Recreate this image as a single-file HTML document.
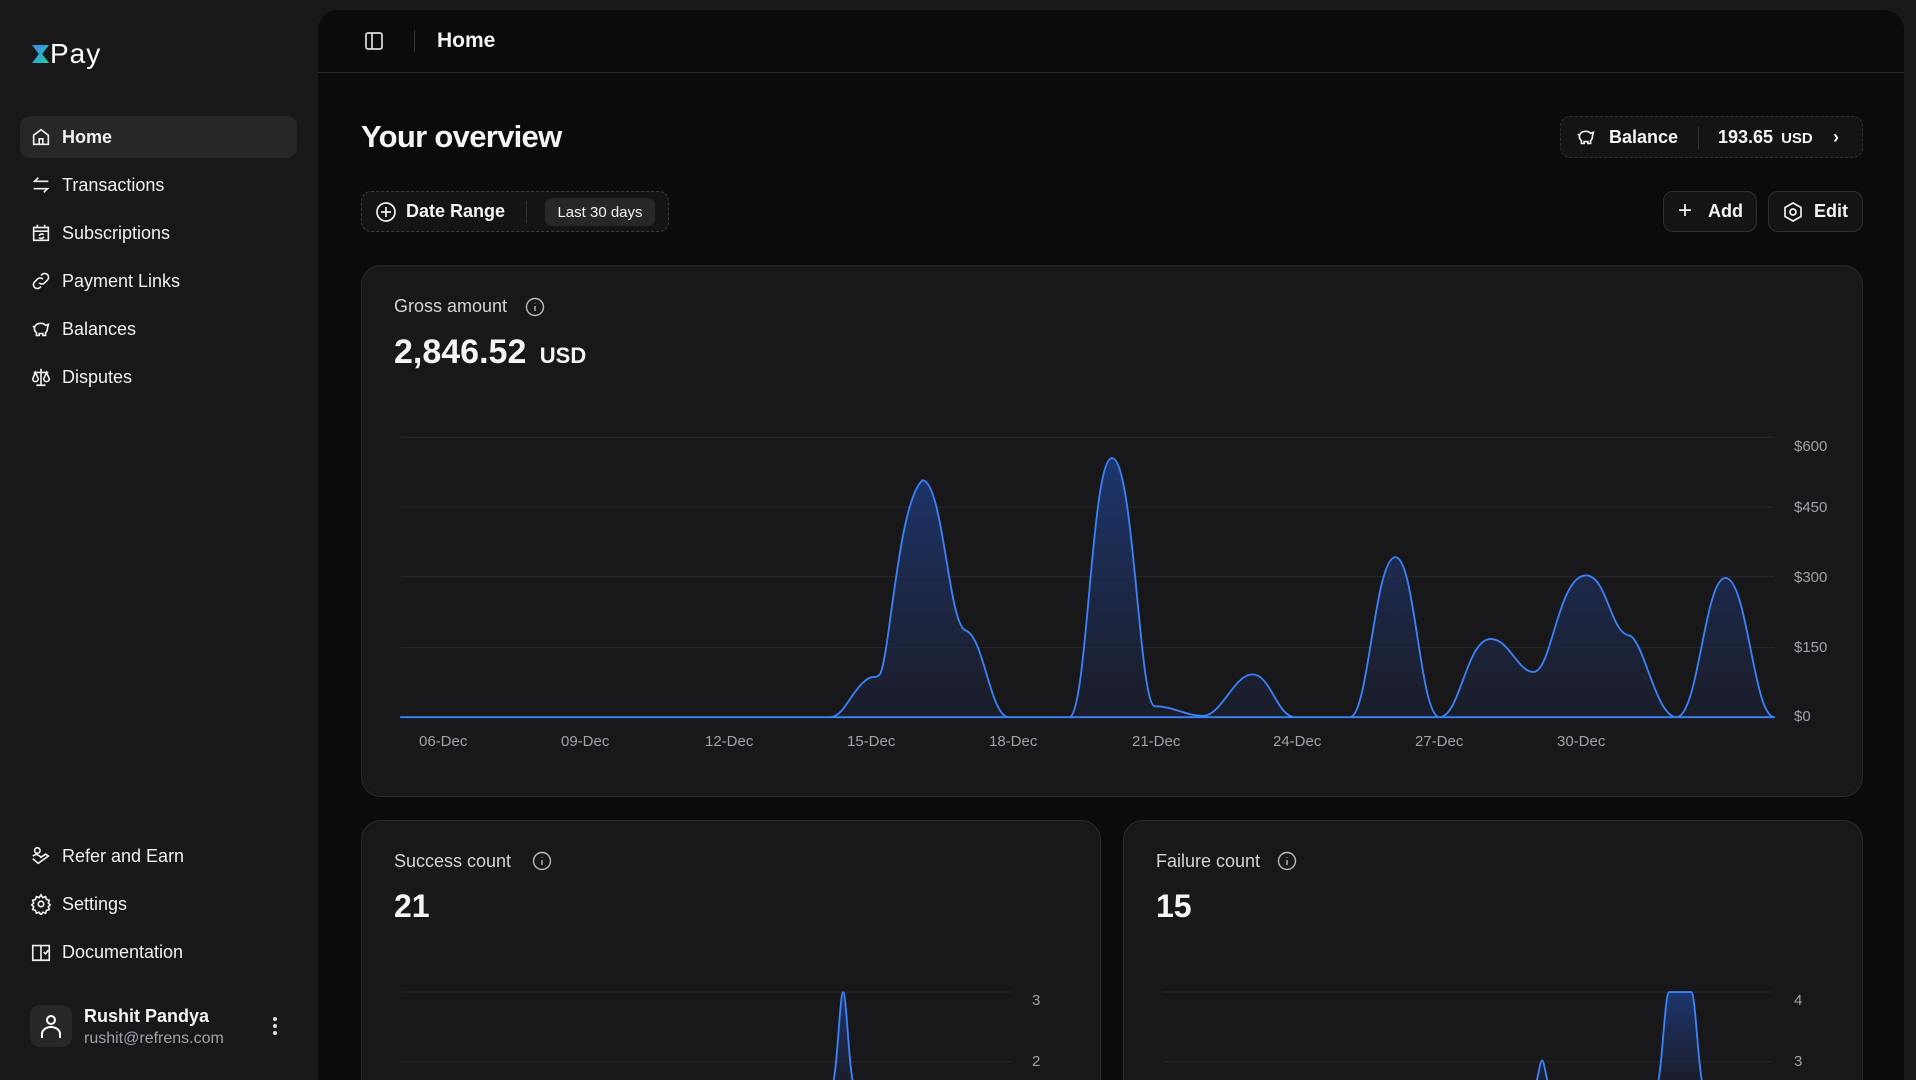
<!DOCTYPE html>
<html style="width:1916px;height:1080px;overflow:hidden"><head><meta charset="utf-8"><style>
*{box-sizing:border-box;margin:0;padding:0}
body{width:1916px;height:1080px;background:#18181b;font-family:"Liberation Sans",sans-serif;color:#f4f4f5;position:relative;overflow:hidden}
.a{position:absolute}
.nav{position:absolute;left:20px;width:277px;height:42px;display:flex;align-items:center;font-size:18px;color:#f0f0f2}
.nav svg{position:absolute;left:10px;width:22px;height:22px}
.nav span{position:absolute;left:42px}
.main{position:absolute;left:318px;top:10px;width:1586px;height:1070px;background:#0b0b0d;border-radius:20px 20px 0 0}
.card{position:absolute;background:#18181b;border:1px solid #2a2a2e;border-radius:20px}
.btn{position:absolute;border:1px solid #2e2e33;border-radius:10px;background:#141417;display:flex;align-items:center;font-size:18px;font-weight:bold}
.lbl{color:#d4d4d8;font-size:18px}
.ax{position:absolute;font-size:15px;color:#a1a1aa}
</style></head><body>
<div class="a" style="left:32px;top:45px;width:17px;height:18px;background:linear-gradient(135deg,#3b82f6,#22d3a0);clip-path:polygon(0 0,100% 0,60% 50%,100% 100%,0 100%,40% 50%)"></div>
<div class="a" style="left:50px;top:38px;font-size:28px;color:#fff;letter-spacing:1px">Pay</div>

<div class="a" style="left:20px;top:116px;width:277px;height:42px;background:#27272a;border-radius:10px"></div>
<div class="nav" style="top:116px"><svg viewBox="0 0 24 24" fill="none" stroke="#eee" stroke-width="1.8"><path d="M4 10l8-6 8 6v10H4z M10 20v-6h4v6"/></svg><span style="font-weight:bold">Home</span></div>
<div class="nav" style="top:164px"><svg viewBox="0 0 24 24" fill="none" stroke="#eee" stroke-width="1.8"><path d="M20 8H5l4-4M4 16h15l-4 4"/></svg><span>Transactions</span></div>
<div class="nav" style="top:212px"><svg viewBox="0 0 24 24" fill="none" stroke="#eee" stroke-width="1.8"><path d="M8 3v4M16 3v4M4 6h16v14H4zM4 10h16M10 15a3 3 0 0 1 5-1M15 16a3 3 0 0 1-5 1"/></svg><span>Subscriptions</span></div>
<div class="nav" style="top:260px"><svg viewBox="0 0 24 24" fill="none" stroke="#eee" stroke-width="1.8"><path d="M10 14a4 4 0 0 0 6 0l3-3a4 4 0 0 0-6-6l-1 1M14 10a4 4 0 0 0-6 0l-3 3a4 4 0 0 0 6 6l1-1"/></svg><span>Payment Links</span></div>
<div class="nav" style="top:308px"><svg viewBox="0 0 24 24" fill="none" stroke="#eee" stroke-width="1.8"><path d="M5 10a7 6 0 0 1 12-2l3-1-1 4a6 6 0 0 1-2 5v3h-3v-2h-4v2H7v-3a6 6 0 0 1-2-6L3 9"/></svg><span>Balances</span></div>
<div class="nav" style="top:356px"><svg viewBox="0 0 24 24" fill="none" stroke="#eee" stroke-width="1.8"><path d="M12 3v18M7 21h10M4 7h16M6 7l-3 7a3 3 0 0 0 6 0zM18 7l-3 7a3 3 0 0 0 6 0z"/></svg><span>Disputes</span></div>

<div class="nav" style="top:835px"><svg viewBox="0 0 24 24" fill="none" stroke="#eee" stroke-width="1.8"><circle cx="8" cy="6" r="3"/><path d="M3 15l6 5 11-8-3-2-6 4M3 12l4-2 5 3"/></svg><span>Refer and Earn</span></div>
<div class="nav" style="top:883px"><svg viewBox="0 0 24 24" fill="none" stroke="#eee" stroke-width="1.8"><circle cx="12" cy="12" r="3"/><path d="M12 2l2 3 3-1 1 3 3 1-1 3 2 2-2 2 1 3-3 1-1 3-3-1-2 3-2-3-3 1-1-3-3-1 1-3-2-2 2-2-1-3 3-1 1-3 3 1z"/></svg><span>Settings</span></div>
<div class="nav" style="top:931px"><svg viewBox="0 0 24 24" fill="none" stroke="#eee" stroke-width="1.8"><path d="M12 6v15M3 5h9v16H3zM12 5h9v16h-9M15 12l2 2 3-4"/></svg><span>Documentation</span></div>

<div class="a" style="left:30px;top:1005px;width:42px;height:42px;background:#27272a;border-radius:10px"></div>
<svg class="a" style="left:39px;top:1012px" width="24" height="28" viewBox="0 0 24 28" fill="none" stroke="#fff" stroke-width="2"><circle cx="12" cy="8" r="4"/><path d="M3 26v-4a9 7 0 0 1 18 0v4"/></svg>
<div class="a" style="left:84px;top:1006px;font-size:18px;font-weight:bold">Rushit Pandya</div>
<div class="a" style="left:84px;top:1030px;font-size:16px;color:#a1a1aa">rushit@refrens.com</div>
<div class="a" style="left:273px;top:1017px;width:4px;height:4px;border-radius:2px;background:#ddd;box-shadow:0 7px 0 #ddd,0 14px 0 #ddd"></div>

<div class="main"></div>
<div class="a" style="left:318px;top:72px;width:1586px;height:1px;background:#27272a"></div>
<svg class="a" style="left:364px;top:31px" width="20" height="20" viewBox="0 0 20 20" fill="none" stroke="#ddd" stroke-width="1.7"><rect x="2" y="2" width="16" height="16" rx="2"/><path d="M8 2v16"/></svg>
<div class="a" style="left:414px;top:30px;width:1px;height:22px;background:#333"></div>
<div class="a" style="left:437px;top:29px;font-size:21px;font-weight:bold">Home</div>

<div class="a" style="left:361px;top:119px;font-size:31px;font-weight:bold;letter-spacing:-0.7px">Your overview</div>

<div class="btn" style="left:361px;top:191px;width:308px;height:41px;border:1px dashed #3a3a40;font-weight:bold">
<svg class="a" style="left:13px" width="22" height="22" viewBox="0 0 22 22" fill="none" stroke="#eee" stroke-width="1.7"><circle cx="11" cy="11" r="9"/><path d="M11 6v10M6 11h10"/></svg>
<span class="a" style="left:44px">Date Range</span>
<div class="a" style="left:164px;top:9px;width:1px;height:22px;background:#333"></div>
<div class="a" style="left:183px;top:6px;height:28px;width:110px;background:#27272a;border-radius:7px;font-size:15px;font-weight:normal;display:flex;align-items:center;justify-content:center">Last 30 days</div></div>

<div class="btn" style="left:1560px;top:116px;width:303px;height:42px;border:1px dashed #2e2e33">
<svg class="a" style="left:14px" width="22" height="22" viewBox="0 0 24 24" fill="none" stroke="#eee" stroke-width="1.8"><path d="M5 10a7 6 0 0 1 12-2l3-1-1 4a6 6 0 0 1-2 5v3h-3v-2h-4v2H7v-3a6 6 0 0 1-2-6L3 9"/></svg>
<span class="a" style="left:48px;font-weight:bold">Balance</span>
<div class="a" style="left:137px;top:10px;width:1px;height:22px;background:#333"></div>
<span class="a" style="left:157px;font-weight:bold">193.65 <span style="font-size:15px;margin-left:3px">USD</span></span>
<span class="a" style="left:272px;font-size:18px">›</span></div>

<div class="btn" style="left:1663px;top:191px;width:94px;height:41px"><span class="a" style="left:14px;font-size:24px;font-weight:normal;top:5px">+</span><span class="a" style="left:44px">Add</span></div>
<div class="btn" style="left:1768px;top:191px;width:95px;height:41px"><svg class="a" style="left:13px" width="22" height="22" viewBox="0 0 22 22" fill="none" stroke="#eee" stroke-width="1.7"><path d="M11 2l8 4.5v9L11 20l-8-4.5v-9z"/><circle cx="11" cy="11" r="3"/></svg><span class="a" style="left:45px">Edit</span></div>

<div class="card" style="left:361px;top:265px;width:1502px;height:532px"></div>
<div class="a lbl" style="left:394px;top:296px">Gross amount</div>
<svg class="a" style="left:525px;top:297px" width="20" height="20" viewBox="0 0 20 20" fill="none" stroke="#bbb" stroke-width="1.4"><circle cx="10" cy="10" r="8.5"/><path d="M10 9v5M10 6v.5"/></svg>
<div class="a" style="left:394px;top:333px;font-size:34px;font-weight:bold">2,846.52 <span style="font-size:22px;margin-left:4px">USD</span></div>

<div class="card" style="left:361px;top:820px;width:740px;height:290px"></div>
<div class="a lbl" style="left:394px;top:851px">Success count</div>
<svg class="a" style="left:532px;top:851px" width="20" height="20" viewBox="0 0 20 20" fill="none" stroke="#bbb" stroke-width="1.4"><circle cx="10" cy="10" r="8.5"/><path d="M10 9v5M10 6v.5"/></svg>
<div class="a" style="left:394px;top:888px;font-size:32px;font-weight:bold">21</div>

<div class="card" style="left:1123px;top:820px;width:740px;height:290px"></div>
<div class="a lbl" style="left:1156px;top:851px">Failure count</div>
<svg class="a" style="left:1277px;top:851px" width="20" height="20" viewBox="0 0 20 20" fill="none" stroke="#bbb" stroke-width="1.4"><circle cx="10" cy="10" r="8.5"/><path d="M10 9v5M10 6v.5"/></svg>
<div class="a" style="left:1156px;top:888px;font-size:32px;font-weight:bold">15</div>

<div class="ax" style="left:1794px;top:438px">$600</div>
<div class="ax" style="left:1794px;top:499px">$450</div>
<div class="ax" style="left:1794px;top:569px">$300</div>
<div class="ax" style="left:1794px;top:639px">$150</div>
<div class="ax" style="left:1794px;top:708px">$0</div>
<div class="ax" style="left:419px;top:733px">06-Dec</div>
<div class="ax" style="left:561px;top:733px">09-Dec</div>
<div class="ax" style="left:705px;top:733px">12-Dec</div>
<div class="ax" style="left:847px;top:733px">15-Dec</div>
<div class="ax" style="left:989px;top:733px">18-Dec</div>
<div class="ax" style="left:1132px;top:733px">21-Dec</div>
<div class="ax" style="left:1273px;top:733px">24-Dec</div>
<div class="ax" style="left:1415px;top:733px">27-Dec</div>
<div class="ax" style="left:1557px;top:733px">30-Dec</div>
<div class="ax" style="left:1032px;top:992px">3</div>
<div class="ax" style="left:1032px;top:1053px">2</div>
<div class="ax" style="left:1794px;top:992px">4</div>
<div class="ax" style="left:1794px;top:1053px">3</div>

<svg class="a" style="left:0;top:0" width="1916" height="1080" viewBox="0 0 1568 884" preserveAspectRatio="none">
<defs><linearGradient id="g" x1="0" y1="0" x2="0" y2="1"><stop offset="0" stop-color="#1e3a7a" stop-opacity="0.9"/><stop offset="1" stop-color="#1c2033" stop-opacity="0.6"/></linearGradient>
<clipPath id="c1"><rect x="296" y="672" width="604" height="212"/></clipPath><clipPath id="c2"><rect x="919" y="672" width="604" height="212"/></clipPath></defs>
<g stroke="#26262a" stroke-width="1"><path d="M328 358H1452M328 415H1452M328 472H1452M328 530H1452M328 587H1452"/>
<path d="M328 812H828M328 869H828M952 812H1450M952 869H1450"/></g>
<path fill="url(#g)" stroke="#3b82f6" stroke-width="1.5" stroke-linejoin="round" d="M328 587L680 587C690 586 695 570 705 560S715 557 720 552C728 540 735 410 755 393C772 395 776 510 790 516C805 520 810 585 825 587L875 587C890 586 893 375 910 375C928 375 932 577 945 578C960 578 970 586 985 586C1000 585 1010 552 1025 552C1040 552 1045 587 1060 587L1105 587C1120 586 1125 456 1142 456C1158 456 1162 587 1178 587C1195 587 1200 523 1220 523C1235 523 1242 550 1255 550C1270 550 1275 471 1298 471C1315 471 1318 518 1333 520C1345 522 1355 587 1372 587C1390 587 1395 473 1412 473C1430 473 1435 587 1452 587Z"/>
<g clip-path="url(#c1)"><path fill="url(#g)" stroke="#3b82f6" stroke-width="1.5" d="M680 890C685 890 687 812 690 812C693 812 695 890 700 890Z"/></g>
<g clip-path="url(#c2)"><path fill="url(#g)" stroke="#3b82f6" stroke-width="1.5" d="M1255 890C1258 890 1260 868 1262 868C1264 868 1266 890 1269 890ZM1355 890C1360 890 1362 812 1366 812L1384 812C1388 812 1390 890 1395 890Z"/></g>
</svg>
</body></html>
